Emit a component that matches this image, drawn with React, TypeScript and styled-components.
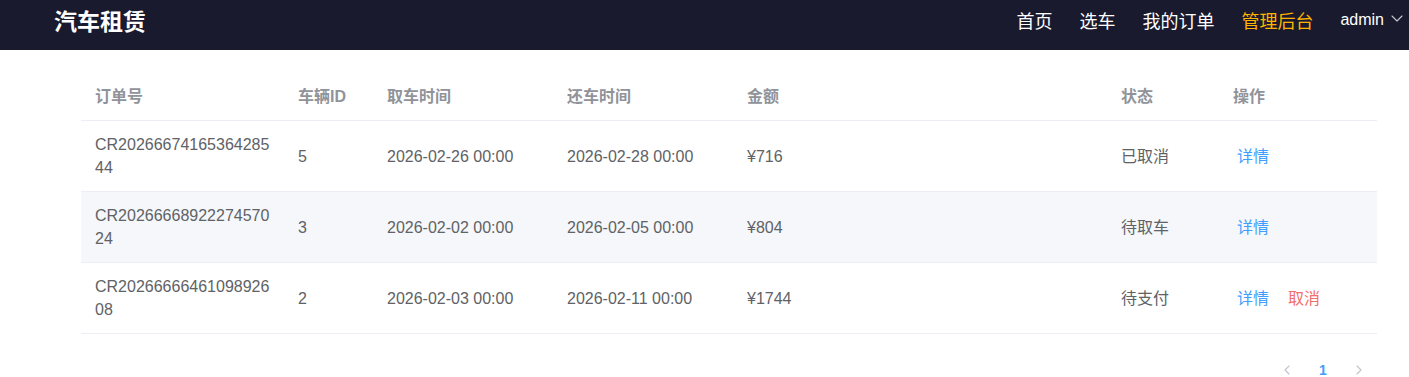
import React from "react";
import styled, { createGlobalStyle } from "styled-components";

const GlobalStyle = createGlobalStyle`
  html, body { margin: 0; padding: 0; background: #ffffff; }
  body {
    font-family: "Liberation Sans", Arial, "Noto Sans CJK SC", sans-serif;
    -webkit-font-smoothing: antialiased;
  }
  * { box-sizing: border-box; }
`;

const Header = styled.header`
  height: 50px;
  background: #1a1a2e;
  display: flex;
  align-items: flex-start;
  justify-content: space-between;
  padding: 0 5px 0 54px;
`;

const Logo = styled.div`
  height: 40px;
  line-height: 40px;
  font-size: 23px;
  font-weight: bold;
  color: #ffffff;
  font-family: "Noto Sans CJK SC", sans-serif;
`;

const Nav = styled.nav`
  display: flex;
  align-items: center;
  height: 40px;
  gap: 27px;
`;

const NavItem = styled.a<{ $active?: boolean }>`
  font-size: 18px;
  color: ${(p) => (p.$active ? "#ffb400" : "#ffffff")};
  font-family: "Noto Sans CJK SC", sans-serif;
  text-decoration: none;
  cursor: pointer;
  line-height: 40px;
`;

const User = styled.div`
  display: flex;
  align-items: center;
  gap: 6px;
  font-size: 16px;
  color: #ffffff;
  font-family: "Liberation Sans", Arial, sans-serif;
  line-height: 40px;
`;

const Main = styled.main`
  padding: 23px 32px 0 81px;
`;

const Table = styled.table`
  width: 1296px;
  border-collapse: collapse;
  table-layout: fixed;
  font-size: 16px;
`;

const Th = styled.th`
  text-align: left;
  padding: 12px 0;
  color: #909399;
  font-weight: bold;
  line-height: 23px;
  border-bottom: 1px solid #ebeef5;
  background: #ffffff;
`;

const Row = styled.tr<{ $striped?: boolean }>`
  background: ${(p) => (p.$striped ? "#f5f7fa" : "#ffffff")};
`;

const Td = styled.td`
  padding: 12px 0;
  color: #606266;
  line-height: 23px;
  border-bottom: 1px solid #ebeef5;
  vertical-align: middle;
`;

const Cell = styled.div<{ $wrap?: boolean }>`
  padding-left: 14px;
  ${(p) => (p.$wrap ? "max-width: 192px; word-break: break-all;" : "white-space: nowrap;")}
`;

const Actions = styled.div`
  display: flex;
  gap: 19px;
  padding-left: 18px;
`;

const LinkBtn = styled.a<{ $danger?: boolean }>`
  color: ${(p) => (p.$danger ? "#f56c6c" : "#409eff")};
  cursor: pointer;
  text-decoration: none;
`;

const Pager = styled.div`
  width: 1296px;
  display: flex;
  justify-content: flex-end;
  gap: 4px;
  margin-top: 20px;
  padding-right: 2px;
`;

const PageBtn = styled.button<{ $active?: boolean }>`
  width: 32px;
  height: 32px;
  border: none;
  background: transparent;
  display: flex;
  align-items: center;
  justify-content: center;
  padding: 0;
  font-size: 14px;
  font-weight: bold;
  font-family: "Liberation Sans", Arial, sans-serif;
  color: ${(p) => (p.$active ? "#409eff" : "#c0c4cc")};
`;

const Chevron = ({ dir }: { dir: "left" | "right" | "down" }) => {
  const d =
    dir === "left"
      ? "M9 3 L5 7 L9 11"
      : dir === "right"
      ? "M5 3 L9 7 L5 11"
      : "M2 5 L7 10 L12 5";
  return (
    <svg width="14" height="14" viewBox="0 0 14 14" fill="none">
      <path d={d} stroke="currentColor" strokeWidth="1.1" strokeLinecap="round" strokeLinejoin="round" />
    </svg>
  );
};

const DownIcon = styled.span`
  color: #c8cad0;
  display: flex;
  margin-top: -4px;
`;

const orders = [
  { id: "CR2026667416536428544", car: "5", start: "2026-02-26 00:00", end: "2026-02-28 00:00", amount: "¥716", status: "已取消", cancel: false },
  { id: "CR2026666892227457024", car: "3", start: "2026-02-02 00:00", end: "2026-02-05 00:00", amount: "¥804", status: "待取车", cancel: false },
  { id: "CR2026666646109892608", car: "2", start: "2026-02-03 00:00", end: "2026-02-11 00:00", amount: "¥1744", status: "待支付", cancel: true },
];

const widths = [203, 89, 180, 180, 374, 112, 158];
const heads = ["订单号", "车辆ID", "取车时间", "还车时间", "金额", "状态", "操作"];

export default function App() {
  return (
    <>
      <GlobalStyle />
      <Header>
        <Logo>汽车租赁</Logo>
        <Nav>
          <NavItem>首页</NavItem>
          <NavItem>选车</NavItem>
          <NavItem>我的订单</NavItem>
          <NavItem $active>管理后台</NavItem>
          <User>
            admin
            <DownIcon>
              <Chevron dir="down" />
            </DownIcon>
          </User>
        </Nav>
      </Header>
      <Main>
        <Table>
          <colgroup>
            {widths.map((w, i) => (
              <col key={i} style={{ width: w }} />
            ))}
          </colgroup>
          <thead>
            <tr>
              {heads.map((h) => (
                <Th key={h}>
                  <Cell>{h}</Cell>
                </Th>
              ))}
            </tr>
          </thead>
          <tbody>
            {orders.map((o, i) => (
              <Row key={o.id} $striped={i % 2 === 1}>
                <Td>
                  <Cell $wrap>{o.id}</Cell>
                </Td>
                <Td><Cell>{o.car}</Cell></Td>
                <Td><Cell>{o.start}</Cell></Td>
                <Td><Cell>{o.end}</Cell></Td>
                <Td><Cell>{o.amount}</Cell></Td>
                <Td><Cell>{o.status}</Cell></Td>
                <Td>
                  <Actions>
                    <LinkBtn>详情</LinkBtn>
                    {o.cancel && <LinkBtn $danger>取消</LinkBtn>}
                  </Actions>
                </Td>
              </Row>
            ))}
          </tbody>
        </Table>
        <Pager>
          <PageBtn><Chevron dir="left" /></PageBtn>
          <PageBtn $active>1</PageBtn>
          <PageBtn><Chevron dir="right" /></PageBtn>
        </Pager>
      </Main>
    </>
  );
}
